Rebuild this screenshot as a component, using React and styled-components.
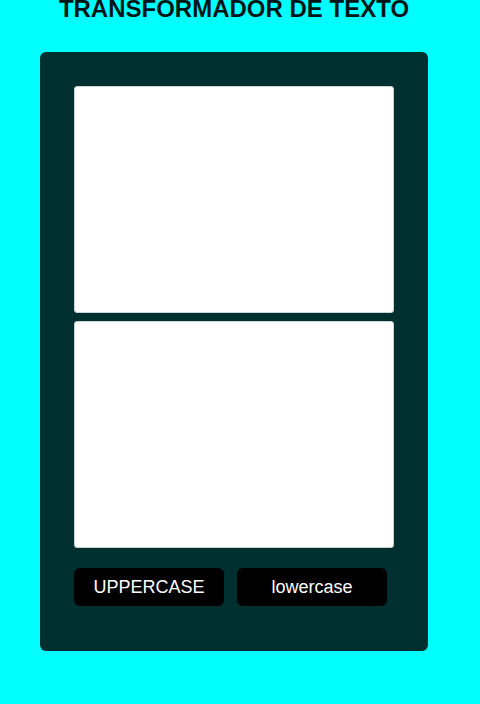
import styled, { createGlobalStyle } from 'styled-components';

// STYLES
const GlobalStyle = createGlobalStyle`
  html, body {
    margin: 0;
    padding: 0;
    background: #00ffff;
    font-family: 'Liberation Sans', Arial, sans-serif;
    overflow: hidden;
  }
`;

const Page = styled.div`
  width: 388px;
  margin-left: 40px;
`;

const Title = styled.h1`
  margin: -3px 0 31px;
  font-size: 24px;
  line-height: 24px;
  font-weight: bold;
  text-align: center;
  color: #001616;
`;

const Panel = styled.div`
  background: #002f30;
  border-radius: 6px;
  padding: 34px 34px 45px;
  display: flex;
  flex-direction: column;
`;

const TextBox = styled.textarea`
  box-sizing: border-box;
  width: 320px;
  height: 227px;
  margin-bottom: ${(props) => props.gap}px;
  border: 1px solid #c9d3d3;
  border-radius: 3px;
  background: #ffffff;
  resize: none;
  outline: none;
  padding: 4px;
  font-family: 'Liberation Sans', Arial, sans-serif;
  font-size: 16px;
`;

const ButtonRow = styled.div`
  display: flex;
  gap: 13px;
`;

const Button = styled.button`
  width: 150px;
  height: 38px;
  border: none;
  border-radius: 6px;
  background: #000000;
  color: #ffffff;
  font-family: 'Liberation Sans', Arial, sans-serif;
  font-size: 18px;
  cursor: pointer;
`;

function App() {
  return (
    <>
      <GlobalStyle />
      <Page>
        <Title>TRANSFORMADOR DE TEXTO</Title>
        <Panel>
          <TextBox gap={8} />
          <TextBox gap={20} readOnly />
          <ButtonRow>
            <Button>UPPERCASE</Button>
            <Button>lowercase</Button>
          </ButtonRow>
        </Panel>
      </Page>
    </>
  );
}

export default App;
